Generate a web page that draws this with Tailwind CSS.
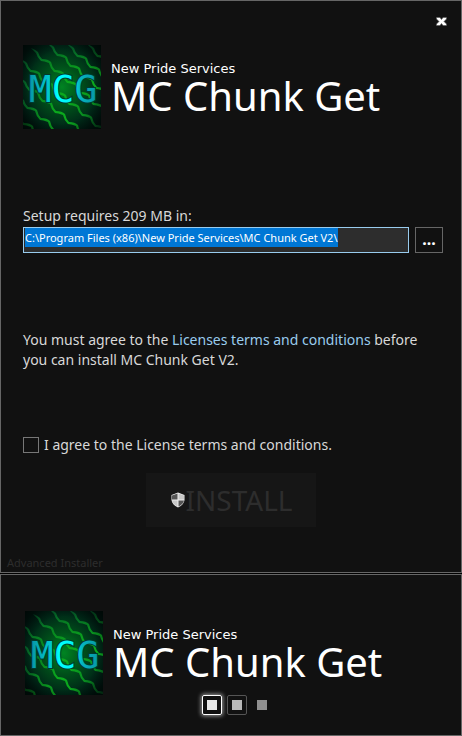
<!DOCTYPE html>
<html lang="en">
<head>
<meta charset="utf-8">
<meta name="viewport" content="width=device-width, initial-scale=1">
<title>MC Chunk Get Setup</title>
<script src="https://cdn.jsdelivr.net/npm/@tailwindcss/browser@4"></script>
</head>
<body class="flex min-h-screen flex-col gap-px bg-black font-['Noto_Sans','Open_Sans',sans-serif] text-[#d8d8d8]">

<!-- Shared logo artwork -->
<svg class="absolute h-0 w-0" aria-hidden="true">
  <defs>
    <radialGradient id="glow" cx="50%" cy="50%" r="62%">
      <stop offset="0" stop-color="#008422"/>
      <stop offset=".4" stop-color="#00501a"/>
      <stop offset=".75" stop-color="#002a18"/>
      <stop offset="1" stop-color="#001812"/>
    </radialGradient>
    <radialGradient id="veins" gradientUnits="userSpaceOnUse" cx="39" cy="42" r="56">
      <stop offset="0" stop-color="#0db41c"/>
      <stop offset=".6" stop-color="#078420"/>
      <stop offset="1" stop-color="#045a2c"/>
    </radialGradient>
    <linearGradient id="cyan" x1="0" x2="1">
      <stop offset="0" stop-color="#0895a5"/>
      <stop offset=".3" stop-color="#00c8d0"/>
      <stop offset=".42" stop-color="#00ffff"/>
      <stop offset=".62" stop-color="#00f4f4"/>
      <stop offset=".75" stop-color="#05b5bd"/>
      <stop offset="1" stop-color="#0895a5"/>
    </linearGradient>
    <radialGradient id="edge" cx="50%" cy="50%" r="72%">
      <stop offset=".6" stop-color="#000" stop-opacity="0"/>
      <stop offset="1" stop-color="#000" stop-opacity=".7"/>
    </radialGradient>
    <!-- One jagged diagonal vein, thicker at each step's shoulder -->
    <path id="wave" d="M0 0Q5 2 7 4Q8 8 11 11Q17 11 20 14Q21 19 24 22Q30 22 33 25Q34 30 37 33Q43 33 46 36Q47 41 50 44Q56 44 59 47Q60 52 63 55Q69 55 72 58Q73 63 76 66Q82 66 85 69L88 77L83 70Q78 68 75 68Q71 64 70 59Q65 57 62 57Q58 53 57 48Q52 46 49 46Q45 42 44 37Q39 35 36 35Q32 31 31 26Q26 24 23 24Q19 20 18 15Q13 13 10 13Q6 9 5 5Z"/>
    <symbol id="badge" viewBox="0 0 78 84">
      <rect width="78" height="84" fill="url(#glow)"/>
      <g fill="url(#veins)">
        <use href="#wave" x="-10" y="67"/>
        <use href="#wave" x="-6" y="51"/>
        <use href="#wave" x="-4" y="33"/>
        <use href="#wave" x="-3" y="14"/>
        <use href="#wave" x="8" y="3"/>
        <use href="#wave" x="24" y="-2"/>
        <use href="#wave" x="44" y="-1"/>
        <use href="#wave" x="64" y="-1"/>
      </g>
      <rect width="78" height="84" fill="url(#edge)"/>
      <text x="40" y="57" text-anchor="middle" font-family="DejaVu Sans Mono, monospace" font-size="38" fill="url(#cyan)" stroke="#003a30" stroke-width="2" paint-order="stroke">MCG</text>
    </symbol>
  </defs>
</svg>

<main class="flex flex-col border border-[#666] bg-[#111]">
  <div class="flex h-11 justify-end px-3 pt-3">
    <button type="button" aria-label="Close" class="flex h-4 w-4 items-center justify-center">
      <svg class="h-[9px] w-[11px]" viewBox="0 0 11 9" fill="#fff" stroke="#555" stroke-width=".6"><path d="M.5.5H4L5.5 2.500 7 .5h3.500V2L8 4.500 10.500 7v1.500H7L5.500 6.500 4 8.500H.5V7L3 4.500.5 2z"/></svg>
    </button>
  </div>

  <header class="flex gap-2.5 px-[22px]">
    <svg class="h-[84px] w-[78px] shrink-0" viewBox="0 0 78 84" role="img" aria-label="MCG logo"><use href="#badge"/></svg>
    <div class="pt-4 text-white">
      <p class="font-['DejaVu_Sans',sans-serif] text-[13px] leading-4">New Pride Services</p>
      <h1 class="text-[40px] leading-[38px] font-normal">MC Chunk Get</h1>
    </div>
  </header>

  <form class="flex flex-col px-[22px] pt-[77px]">
    <label for="path" class="text-sm leading-5">Setup requires 209 MB in:</label>
    <div class="mt-px -mr-1 flex gap-1.5">
      <input id="path" type="text" value="C:\Program Files (x86)\New Pride Services\MC Chunk Get V2\" class="min-w-0 flex-1 border border-[#99ccee] bg-[#2d2d2d] pb-[5px] pl-px text-[11px] leading-[19px] text-white outline-none selection:bg-[#0078d7fd] selection:text-white">
      <button type="button" aria-label="Browse" class="flex w-7 items-end justify-center border border-[#666] pb-[5px]">
        <span class="text-base leading-4 font-bold text-white">...</span>
      </button>
    </div>

    <p class="mt-[77px] text-sm leading-5">You must agree to the <a href="#license" class="text-[#99ccee]">Licenses terms and conditions</a> before you can install MC Chunk Get V2.</p>

    <div class="mt-[65px] flex items-center gap-[5px]">
      <input id="agree" type="checkbox" class="h-4 w-4 appearance-none border border-[#777] bg-[#111]">
      <label for="agree" class="text-sm leading-5">I agree to the License terms and conditions.</label>
    </div>

    <button type="submit" disabled class="mt-[18px] flex h-[54px] w-[170px] items-center justify-center self-center bg-[#161616] text-[28px] leading-10 text-[#2d2d2d]">
      <svg class="h-4 w-4" viewBox="0 0 16 16" aria-hidden="true">
        <path d="M8 .5 14.500 3v5Q14 12.500 8 15.500 2 12.500 1.500 8V3z" fill="#eee"/>
        <path d="M7.500 1.500V7.500H2V3.500zM8.500 8.500H14Q13.500 12 8.500 14.500z" fill="#555"/>
        <path d="M8.500 1.500 14 3.500v4H8.500zM2 8.500h5.500v6Q2.500 12 2 8.500z" fill="#c8c8c8"/>
      </svg>
      <span>INSTALL</span>
    </button>
  </form>

  <footer class="mt-7 px-1.5 pb-px text-[11px] leading-4 text-[#2d2d2d]">Advanced Installer</footer>
</main>

<section class="flex flex-1 flex-col border border-[#666] bg-[#111]" aria-label="Loading">
  <header class="flex gap-2.5 px-6 pt-9">
    <svg class="h-[84px] w-[78px] shrink-0" viewBox="0 0 78 84" role="img" aria-label="MCG logo"><use href="#badge"/></svg>
    <div class="pt-4 text-white">
      <p class="font-['DejaVu_Sans',sans-serif] text-[13px] leading-4">New Pride Services</p>
      <h2 class="text-[40px] leading-[38px] font-normal">MC Chunk Get</h2>
    </div>
  </header>
  <div class="flex justify-center gap-[5px] pl-3">
    <span class="flex h-5 w-5 items-center justify-center rounded-xs border border-white shadow-[0_0_4px_1px_#999]"><span class="h-2.5 w-2.5 bg-[#e8e8e8]"></span></span>
    <span class="flex h-5 w-5 items-center justify-center rounded-xs border border-[#555]"><span class="h-2.5 w-2.5 bg-[#b8b8b8]"></span></span>
    <span class="flex h-5 w-5 items-center justify-center"><span class="h-2.5 w-2.5 bg-[#909090]"></span></span>
  </div>
</section>

<script>
  const path = document.getElementById('path');
  path.focus();
  path.select();
</script>
</body>
</html>
